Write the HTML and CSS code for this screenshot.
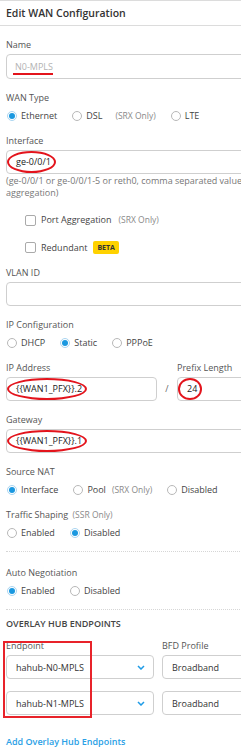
FILE: index.html
```html
<!DOCTYPE html>
<html>
<head>
	<meta charset="utf-8">
	<title>Edit WAN Configuration</title>
	<link rel="stylesheet" href="styles.css">
</head>
<body>
	<div class="panel">
		<h1 class="titre">Edit WAN Configuration</h1>

		<div class="form">
			<div class="field">
				<div class="label">Name</div>
				<div class="input large disabled"><span class="souligne">N0-MPLS</span></div>
			</div>

			<div class="field">
				<div class="label">WAN Type</div>
				<div class="radios">
					<span class="option"><i class="radio on"></i>Ethernet</span>
					<span class="option"><i class="radio"></i>DSL <small class="hint wide">(SRX Only)</small></span>
					<span class="option"><i class="radio"></i>LTE</span>
				</div>
			</div>

			<div class="field">
				<div class="label">Interface</div>
				<div class="input"><span class="mark">ge-0/0/1</span></div>
				<div class="help">(ge-0/0/1 or ge-0/0/1-5 or reth0, comma separated values for<br>aggregation)</div>
			</div>

			<div class="check"><i class="box"></i>Port Aggregation <small class="hint">(SRX Only)</small></div>
			<div class="check"><i class="box"></i>Redundant <span class="beta">BETA</span></div>

			<div class="field">
				<div class="label">VLAN ID</div>
				<div class="input"></div>
			</div>

			<div class="field">
				<div class="label">IP Configuration</div>
				<div class="radios">
					<span class="option"><i class="radio"></i>DHCP</span>
					<span class="option"><i class="radio on"></i>Static</span>
					<span class="option"><i class="radio"></i>PPPoE</span>
				</div>
			</div>

			<div class="field pair">
				<div class="ip">
					<div class="label">IP Address</div>
					<div class="input"><span class="mark">{{WAN1_PFX}}.2</span></div>
				</div>
				<div class="slash">/</div>
				<div class="prefix">
					<div class="label">Prefix Length</div>
					<div class="input"><span class="mark">24</span></div>
				</div>
			</div>

			<div class="field">
				<div class="label">Gateway</div>
				<div class="input"><span class="mark">{{WAN1_PFX}}.1</span></div>
			</div>

			<div class="field">
				<div class="label">Source NAT</div>
				<div class="radios">
					<span class="option"><i class="radio on"></i>Interface</span>
					<span class="option"><i class="radio"></i>Pool <small class="hint">(SRX Only)</small></span>
					<span class="option"><i class="radio"></i>Disabled</span>
				</div>
			</div>

			<div class="field">
				<div class="label">Traffic Shaping <small class="hint">(SSR Only)</small></div>
				<div class="radios">
					<span class="option"><i class="radio"></i>Enabled</span>
					<span class="option"><i class="radio on"></i>Disabled</span>
				</div>
			</div>

			<div class="sep"></div>

			<div class="field">
				<div class="label">Auto Negotiation</div>
				<div class="radios">
					<span class="option"><i class="radio on"></i>Enabled</span>
					<span class="option"><i class="radio"></i>Disabled</span>
				</div>
			</div>

			<div class="sep"></div>

			<div class="section-title">OVERLAY HUB ENDPOINTS</div>

			<div class="endpoints">
				<div class="ep-col">
					<div class="label">Endpoint</div>
					<div class="select">hahub-N0-MPLS
						<svg width="8" height="5" viewBox="0 0 8 5"><path d="M1 1 L4 4 L7 1" fill="none" stroke="#1e9be6" stroke-width="1.5"/></svg>
					</div>
					<div class="select">hahub-N1-MPLS
						<svg width="8" height="5" viewBox="0 0 8 5"><path d="M1 1 L4 4 L7 1" fill="none" stroke="#1e9be6" stroke-width="1.5"/></svg>
					</div>
					<div class="cadre"></div>
				</div>
				<div class="bfd-col">
					<div class="label">BFD Profile</div>
					<div class="select">Broadband</div>
					<div class="select">Broadband</div>
				</div>
			</div>

			<div class="add">Add Overlay Hub Endpoints</div>
		</div>
	</div>
</body>
</html>
```

FILE: styles.css
```css
html {
	font-family: "Open Sans", "DejaVu Sans", sans-serif;
}
body {
	margin: 0;
	background: #fff;
	overflow: hidden;
}
.panel {
	width: 300px;
}
.titre {
	margin: 0;
	height: 23px;
	padding: 1px 0 0 6px;
	line-height: 23px;
	border-top: 1px solid #dcdcdc;
	border-bottom: 1px solid #dcdcdc;
	font-size: 10.5px;
	font-weight: 600;
	color: #333;
}
.form {
	padding: 0 6px;
}
.field {
	margin-top: 13px;
}
.label {
	font-size: 9px;
	line-height: 12px;
	color: #555;
}
.input {
	margin-top: 3px;
	height: 24px;
	box-sizing: border-box;
	border: 1px solid #cfcfcf;
	border-radius: 4px;
	padding-left: 9px;
	display: flex;
	align-items: center;
	font-size: 9px;
	line-height: 12px;
	color: #222;
}
.input.large {
	height: 25px;
}
.disabled {
	color: #b3b3b3;
	padding-left: 8px;
}
.radios {
	margin-top: 6px;
	padding-left: 1px;
	display: flex;
	gap: 15px;
	font-size: 9px;
	line-height: 12px;
	color: #444;
}
.option {
	display: flex;
	align-items: center;
	gap: 4px;
}
.radio {
	width: 10px;
	height: 10px;
	box-sizing: border-box;
	border: 1px solid #b8b8b8;
	border-radius: 50%;
	display: flex;
	align-items: center;
	justify-content: center;
}
.radio.on {
	border-color: #a9d5f1;
}
.radio.on::after {
	content: "";
	width: 6px;
	height: 6px;
	border-radius: 50%;
	background: #1a98e0;
}
.hint {
	font-size: 8.5px;
	color: #8a8a8a;
	margin-left: 2px;
}
.hint.wide {
	margin-left: 9px;
}
.help {
	margin-top: 1px;
	font-size: 9px;
	line-height: 12px;
	color: #777;
	white-space: nowrap;
}
.check {
	margin-top: 15px;
	padding-left: 19px;
	display: flex;
	align-items: center;
	gap: 5px;
	font-size: 9px;
	line-height: 12px;
	color: #444;
}
.box {
	width: 11px;
	height: 11px;
	box-sizing: border-box;
	border: 1px solid #aaa;
	border-radius: 2px;
}
.beta {
	margin-left: 1px;
	padding: 0 4px;
	height: 13px;
	line-height: 13px;
	border-radius: 2px;
	background: #ffd200;
	color: #333;
	font-size: 7px;
	font-weight: 700;
}
.pair {
	display: flex;
	align-items: flex-end;
}
.ip {
	width: 151px;
}
.slash {
	width: 20px;
	height: 24px;
	line-height: 24px;
	text-align: center;
	font-size: 9px;
	color: #666;
}
.prefix {
	flex: 1;
}
.mark,
.souligne {
	position: relative;
}
.mark::after {
	content: "";
	position: absolute;
	top: -5px;
	bottom: -5px;
	left: -9px;
	right: -5px;
	border: 2px solid #e3141c;
	border-radius: 50%;
}
.souligne::after {
	content: "";
	position: absolute;
	left: -2px;
	right: 0;
	bottom: -2px;
	height: 2px;
	background: #e3141c;
}
.sep {
	margin-top: 12px;
	border-top: 1px dotted #d6d6d6;
}
.sep + .field {
	margin-top: 15px;
}
.section-title {
	margin-top: 8px;
	font-size: 9px;
	line-height: 12px;
	font-weight: 600;
	color: #444;
}
.endpoints {
	margin-top: 10px;
	display: flex;
	gap: 8px;
}
.ep-col {
	width: 148px;
	position: relative;
}
.bfd-col {
	flex: 1;
}
.select {
	margin-top: 3px;
	height: 24px;
	box-sizing: border-box;
	border: 1px solid #cfcfcf;
	border-radius: 4px;
	padding: 0 8px 0 9px;
	display: flex;
	align-items: center;
	justify-content: space-between;
	font-size: 9px;
	color: #333;
}
.select + .select {
	margin-top: 12px;
}
.cadre {
	position: absolute;
	left: -3px;
	top: 1px;
	width: 89px;
	height: 77px;
	box-sizing: border-box;
	border: 2px solid #e8232a;
}
.add {
	margin-top: 21px;
	font-size: 9px;
	line-height: 12px;
	font-weight: 600;
	color: #2a9fe6;
}
```
